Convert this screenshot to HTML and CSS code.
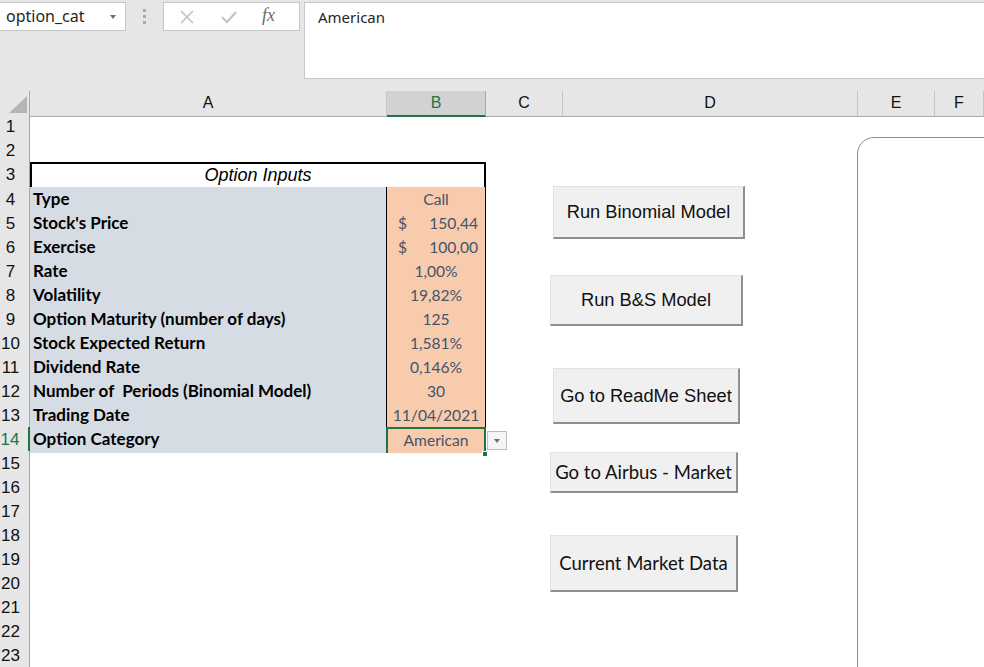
FILE: index.html
```html
<!DOCTYPE html>
<html>
<head>
<meta charset="utf-8">
<link rel="stylesheet" href="styles.css">
</head>
<body>
<div class="app">
  <div class="formula-area">
    <div class="namebox">
      <span class="namebox-text">option_cat</span>
      <span class="tri-down small"></span>
    </div>
    <div class="grip"><i></i><i></i><i></i></div>
    <div class="fx-box">
      <svg class="ico" width="16" height="16" viewBox="0 0 16 16"><path d="M2 2 L14 14 M14 2 L2 14" stroke="#c2c2c2" stroke-width="1.6" fill="none"/></svg>
      <svg class="ico" width="18" height="16" viewBox="0 0 18 16"><path d="M2 8 L7 13 L16 3" stroke="#c2c2c2" stroke-width="2" fill="none"/></svg>
      <span class="fx">fx</span>
    </div>
    <div class="formula-input">American</div>
  </div>

  <div class="sheet">
    <div class="row head">
      <div class="corner"><svg width="20" height="18" viewBox="0 0 20 18"><path d="M19 0 L19 17 L1 17 Z" fill="#b5b5b5"/></svg></div>
      <div class="ch">A</div>
      <div class="ch sel">B</div>
      <div class="ch">C</div>
      <div class="ch">D</div>
      <div class="ch">E</div>
      <div class="ch">F</div>
    </div>

    <div class="row"><div class="rh">1</div></div>
    <div class="row"><div class="rh">2</div></div>
    <div class="row r3">
      <div class="rh">3</div>
      <div class="title">Option Inputs</div>
    </div>
    <div class="row"><div class="rh">4</div><div class="ca">Type</div><div class="cb">Call</div></div>
    <div class="row"><div class="rh">5</div><div class="ca">Stock's Price</div><div class="cb acc"><span>$</span><span>150,44</span></div></div>
    <div class="row"><div class="rh">6</div><div class="ca">Exercise</div><div class="cb acc"><span>$</span><span>100,00</span></div></div>
    <div class="row"><div class="rh">7</div><div class="ca">Rate</div><div class="cb">1,00%</div></div>
    <div class="row"><div class="rh">8</div><div class="ca">Volatility</div><div class="cb">19,82%</div></div>
    <div class="row"><div class="rh">9</div><div class="ca">Option Maturity (number of days)</div><div class="cb">125</div></div>
    <div class="row"><div class="rh">10</div><div class="ca">Stock Expected Return</div><div class="cb">1,581%</div></div>
    <div class="row"><div class="rh">11</div><div class="ca">Dividend Rate</div><div class="cb">0,146%</div></div>
    <div class="row"><div class="rh">12</div><div class="ca">Number of&nbsp; Periods (Binomial Model)</div><div class="cb">30</div></div>
    <div class="row"><div class="rh">13</div><div class="ca">Trading Date</div><div class="cb">11/04/2021</div></div>
    <div class="row last">
      <div class="rh sel">14</div>
      <div class="ca">Option Category</div>
      <div class="cb active">American<span class="handle"></span></div>
      <div class="cc"><span class="dd"><span class="tri-down small"></span></span></div>
    </div>
    <div class="row"><div class="rh">15</div></div>
    <div class="row"><div class="rh">16</div></div>
    <div class="row"><div class="rh">17</div></div>
    <div class="row"><div class="rh">18</div></div>
    <div class="row"><div class="rh">19</div></div>
    <div class="row"><div class="rh">20</div></div>
    <div class="row"><div class="rh">21</div></div>
    <div class="row"><div class="rh">22</div></div>
    <div class="row"><div class="rh">23</div></div>

    <div class="btn arial b1">Run Binomial Model</div>
    <div class="btn arial b2">Run B&amp;S Model</div>
    <div class="btn arial b3">Go to ReadMe Sheet</div>
    <div class="btn cal b4">Go to Airbus - Market</div>
    <div class="btn cal b5">Current Market Data</div>
    <div class="panel"></div>
  </div>
</div>
</body>
</html>
```

FILE: styles.css
```css
* { box-sizing: border-box; }
html, body { margin: 0; padding: 0; background: #fff; }
body { width: 984px; height: 667px; overflow: hidden; font-family: "Liberation Sans", Arial, sans-serif; }

.app { width: 984px; height: 667px; overflow: hidden; }

.formula-area {
  height: 91px;
  background: #e6e6e6;
  display: flex;
  align-items: flex-start;
  padding-top: 2px;
  position: relative;
}
.namebox {
  width: 126px; height: 29px;
  background: #fff;
  border: 1px solid #c6c6c6;
  border-left: none;
  display: flex; align-items: center; justify-content: space-between;
  padding: 0 9px 0 6px;
  font-family: "Noto Sans", "Open Sans", sans-serif;
  font-size: 16px; color: #262626;
}
.namebox-text { position: relative; top: -1px; }
.tri-down.small {
  width: 0; height: 0;
  border-left: 3.5px solid transparent;
  border-right: 3.5px solid transparent;
  border-top: 4px solid #6d6d6d;
}
.grip {
  width: 37px; height: 29px;
  display: flex; flex-direction: column; align-items: center; justify-content: center; gap: 3px;
}
.grip i { display: block; width: 3px; height: 3px; background: #acacac; }
.fx-box {
  width: 137px; height: 29px;
  background: #fff;
  border: 1px solid #c6c6c6;
  display: flex; align-items: center;
  padding-left: 15px;
}
.fx-box .ico:first-child { margin-right: 25px; }
.fx-box .ico:nth-child(2) { margin-right: 24px; }
.fx {
  font-family: "Liberation Serif", "Times New Roman", serif;
  font-style: italic; font-size: 18px; color: #6a6a6a;
  position: relative; top: -1px;
}
.formula-input {
  margin-left: 4px;
  flex: 1;
  height: 77px;
  background: #fff;
  border: 1px solid #c6c6c6;
  border-right: none;
  padding: 4px 0 0 13px;
  font-family: "Noto Sans", "Open Sans", sans-serif;
  font-size: 15px; color: #262626;
}

.sheet { position: relative; }
.row {
  display: grid;
  grid-template-columns: 30px 357px 99px 77px 295px 77px 49px;
  height: 24px;
}
.row.r3 { height: 25px; }
.row.head { height: 23px; }

.corner {
  background: #e6e6e6;
  border-right: 1px solid #ababab;
  border-bottom: 1px solid #ababab;
  display: flex; align-items: flex-end; justify-content: flex-end;
  padding: 0 1px 2px 0;
}
.ch {
  background: #e6e6e6;
  border-right: 1px solid #c4c4c4;
  border-bottom: 1px solid #ababab;
  text-align: center;
  font-size: 16px; line-height: 24px; color: #111;
}
.ch.sel {
  background: #d2d2d2;
  color: #217346;
  border-bottom: 2px solid #217346;
  border-right-color: #ababab;
}
.rh {
  grid-column: 1;
  background: #e6e6e6;
  border-right: 1px solid #a5a5a5;
  border-bottom: 1px solid #d0d0d0;
  font-size: 17px; line-height: 25px; color: #111;
  text-align: center;
  padding-right: 8px;
  white-space: nowrap;
}
.rh.sel { color: #217346; border-right: 2px solid #217346; }

.title {
  grid-column: 2 / span 2;
  border: 2px solid #000;
  font-family: "Liberation Sans", Arial, sans-serif;
  font-style: italic; font-size: 18px;
  text-align: center; line-height: 23px;
  color: #000;
}

.ca, .cb {
  font-family: "Lato", "Open Sans", sans-serif;
  line-height: 24px;
  border-bottom: 1px solid #000;
  border-right: 1px solid #000;
  white-space: nowrap;
}
.ca {
  grid-column: 2;
  background: #d6dce4;
  font-weight: 700;
  font-size: 17px;
  color: #000;
  padding-left: 3px;
}
.cb {
  grid-column: 3;
  background: #f8cbad;
  color: #44546a;
  font-size: 15.6px;
  text-align: center;
  position: relative;
}
.cb.acc { display: flex; justify-content: space-between; padding: 0 7px 0 11px; }
.row.last .ca, .row.last .cb { border-bottom: none; }
.cb.active {
  border: 2px solid #217346;
  line-height: 22px;
  margin-left: -1px;
  width: 100px;
}
.handle {
  position: absolute; right: -4px; bottom: -4px;
  width: 6px; height: 6px;
  background: #217346; border: 1px solid #fff;
}
.cc { grid-column: 4; position: relative; }
.dd {
  position: absolute; left: 1px; top: 4px;
  width: 20px; height: 19px;
  background: #f5f5f5;
  border: 1px solid #bdbdbd;
  display: flex; align-items: center; justify-content: center;
}

.btn {
  position: absolute;
  background: #f0f0f0;
  border-top: 1px solid #e2e2e2;
  border-left: 1px solid #e2e2e2;
  border-right: 2px solid #8f8f8f;
  border-bottom: 2px solid #8f8f8f;
  display: flex; align-items: center; justify-content: center;
  color: #111;
  white-space: nowrap;
}
.btn.arial { font-family: "Liberation Sans", Arial, sans-serif; font-size: 18.3px; }
.btn.cal { font-family: "Lato", "Open Sans", sans-serif; font-size: 18.5px; }
.b1 { left: 553px; top: 95px; width: 192px; height: 53px; }
.b2 { left: 550px; top: 184px; width: 193px; height: 51px; }
.b3 { left: 553px; top: 277px; width: 187px; height: 56px; }
.b4 { left: 550px; top: 361px; width: 188px; height: 41px; }
.b5 { left: 550px; top: 444px; width: 188px; height: 57px; }

.panel {
  position: absolute;
  left: 857px; top: 46px;
  width: 200px; height: 600px;
  border: 1px solid #8c8c8c;
  border-top-left-radius: 17px;
  background: #fff;
}
```
